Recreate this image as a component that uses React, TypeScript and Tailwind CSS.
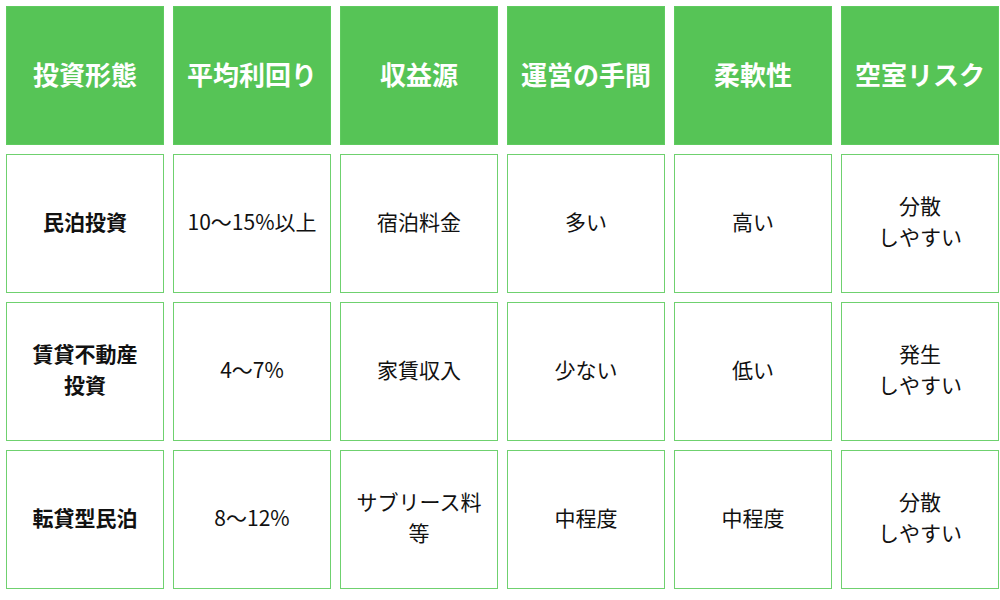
import React from 'react'

const headers = ['投資形態', '平均利回り', '収益源', '運営の手間', '柔軟性', '空室リスク']

const rows: string[][] = [
  ['民泊投資', '10〜15%以上', '宿泊料金', '多い', '高い', '分散\nしやすい'],
  ['賃貸不動産\n投資', '4〜7%', '家賃収入', '少ない', '低い', '発生\nしやすい'],
  ['転貸型民泊', '8〜12%', 'サブリース料\n等', '中程度', '中程度', '分散\nしやすい'],
]

const font = { fontFamily: '"Noto Sans CJK JP", "Noto Sans", sans-serif' }

export default function App() {
  return (
    <div className="w-[1000px] h-[600px] bg-white pl-[6px] pt-[6px]" style={font}>
      <div className="grid grid-cols-[repeat(6,158px)] auto-rows-[139px] gap-x-[9px] gap-y-[9px]">
        {headers.map((h) => (
          <div
            key={h}
            className="flex items-center justify-center pb-[4px] bg-[#56c456] border border-[#5fcb5f] text-white text-[26px] font-bold"
          >
            {h}
          </div>
        ))}
        {rows.map((row, ri) =>
          row.map((cell, ci) => (
            <div
              key={`${ri}-${ci}`}
              className={`flex items-center justify-center pb-[5px] text-center whitespace-pre-line border-[1.5px] border-[#6fd16f] text-[21px] leading-[31px] text-[#111] ${
                ci === 0 ? 'font-bold' : 'font-normal'
              }`}
            >
              {cell}
            </div>
          ))
        )}
      </div>
    </div>
  )
}
